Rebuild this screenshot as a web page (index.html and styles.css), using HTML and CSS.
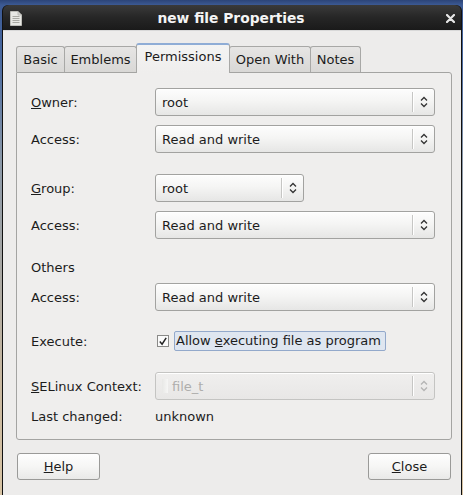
FILE: index.html
```html
<!DOCTYPE html>
<html>
<head>
<meta charset="utf-8">
<link rel="stylesheet" href="styles.css">
</head>
<body>
<div class="desktop">
  <div class="window">
    <div class="titlebar">
      <svg class="doc-icon" width="12" height="15" viewBox="0 0 12 15">
        <path d="M0.5 0.5 H8 L11.5 4 V14.5 H0.5 Z" fill="#e8e8e4" stroke="#bdbdb8"/>
        <path d="M8 0.5 V4 H11.5" fill="#cfcfca" stroke="#bdbdb8"/>
        <path d="M2.5 5.5 H9.5 M2.5 7.5 H9.5 M2.5 9.5 H9.5 M2.5 11.5 H9.5" stroke="#a8a8a2" stroke-width="1"/>
      </svg>
      <div class="title">new file Properties</div>
      <svg class="close-x" width="9" height="9" viewBox="0 0 9 9">
        <path d="M1 1 L8 8 M8 1 L1 8" stroke="#e6e6e6" stroke-width="2.2" stroke-linecap="round"/>
      </svg>
    </div>
    <div class="client">
      <div class="notebook">
        <div class="tabs">
          <div class="tab t-basic">Basic</div>
          <div class="tab t-emblems">Emblems</div>
          <div class="tab active t-perm">Permissions</div>
          <div class="tab t-open">Open With</div>
          <div class="tab t-notes">Notes</div>
        </div>
        <div class="panel">
          <div class="row r-owner">
            <div class="label"><u>O</u>wner:</div>
            <div class="combo wide"><span class="val">root</span><span class="sep"></span><span class="arrows"><svg width="8" height="12" viewBox="0 0 8 12"><path d="M1 4.5 L4 1.5 L7 4.5 M1 7.5 L4 10.5 L7 7.5" fill="none" stroke="#333" stroke-width="1.3"/></svg></span></div>
          </div>
          <div class="row r-gap9">
            <div class="label">Access:</div>
            <div class="combo wide"><span class="val">Read and write</span><span class="sep"></span><span class="arrows"><svg width="8" height="12" viewBox="0 0 8 12"><path d="M1 4.5 L4 1.5 L7 4.5 M1 7.5 L4 10.5 L7 7.5" fill="none" stroke="#333" stroke-width="1.3"/></svg></span></div>
          </div>
          <div class="row r-gap21">
            <div class="label"><u>G</u>roup:</div>
            <div class="combo narrow"><span class="val">root</span><span class="sep"></span><span class="arrows"><svg width="8" height="12" viewBox="0 0 8 12"><path d="M1 4.5 L4 1.5 L7 4.5 M1 7.5 L4 10.5 L7 7.5" fill="none" stroke="#333" stroke-width="1.3"/></svg></span></div>
          </div>
          <div class="row r-gap9">
            <div class="label">Access:</div>
            <div class="combo wide"><span class="val">Read and write</span><span class="sep"></span><span class="arrows"><svg width="8" height="12" viewBox="0 0 8 12"><path d="M1 4.5 L4 1.5 L7 4.5 M1 7.5 L4 10.5 L7 7.5" fill="none" stroke="#333" stroke-width="1.3"/></svg></span></div>
          </div>
          <div class="row r-others">
            <div class="label">Others</div>
          </div>
          <div class="row r-gap6">
            <div class="label">Access:</div>
            <div class="combo wide"><span class="val">Read and write</span><span class="sep"></span><span class="arrows"><svg width="8" height="12" viewBox="0 0 8 12"><path d="M1 4.5 L4 1.5 L7 4.5 M1 7.5 L4 10.5 L7 7.5" fill="none" stroke="#333" stroke-width="1.3"/></svg></span></div>
          </div>
          <div class="row r-exec">
            <div class="label">Execute:</div>
            <div class="check-wrap">
              <span class="checkbox"><svg width="11" height="11" viewBox="0 0 11 11"><path d="M2 5.5 L4.5 8.5 L9 1.5" fill="none" stroke="#222" stroke-width="1.6"/></svg></span>
              <span class="check-label">Allow <u>e</u>xecuting file as program</span>
            </div>
          </div>
          <div class="row r-gap21">
            <div class="label"><u>S</u>ELinux Context:</div>
            <div class="combo wide disabled"><span class="ghost"></span><span class="val">file_t</span><span class="sep"></span><span class="arrows"><svg width="8" height="12" viewBox="0 0 8 12"><path d="M1 4.5 L4 1.5 L7 4.5 M1 7.5 L4 10.5 L7 7.5" fill="none" stroke="#b4b4b4" stroke-width="1.3"/></svg></span></div>
          </div>
          <div class="row r-last">
            <div class="label">Last changed:</div>
            <div class="plain">unknown</div>
          </div>
        </div>
      </div>
      <div class="buttons">
        <div class="btn"><u>H</u>elp</div>
        <div class="btn"><u>C</u>lose</div>
      </div>
    </div>
  </div>
</div>
</body>
</html>
```

FILE: styles.css
```css
* { box-sizing: border-box; }
html, body {
  margin: 0;
  padding: 0;
}
body {
  width: 463px;
  height: 495px;
  overflow: hidden;
  font-family: "DejaVu Sans", sans-serif;
  font-size: 13px;
  color: #1c1c1c;
}
.desktop {
  width: 463px;
  height: 495px;
  background: linear-gradient(180deg, #2c4478 0px, #3c5a94 5px, #4a6aa0 60px, #8a98a8 160px, #c8b8a0 380px, #d8c4a4 495px);
  padding: 5px 1px 0 2px;
}
.window {
  height: 490px;
  background: #111;
  border-radius: 6px 6px 0 0;
  padding: 0 1px;
  display: flex;
  flex-direction: column;
}
.titlebar {
  height: 25px;
  flex: none;
  border-radius: 6px 6px 0 0;
  background: linear-gradient(180deg, #3a3a3a 0%, #262626 50%, #1a1a1a 100%);
  display: flex;
  align-items: center;
  position: relative;
  padding: 0 6px 0 7px;
}
.doc-icon { flex: none; margin-top: 1px; }
.title {
  flex: 1;
  text-align: center;
  color: #f4f4f4;
  font-weight: bold;
  font-size: 13.8px;
  margin-left: -6px;
  margin-top: 1px;
}
.close-x { flex: none; margin-top: 1px; }
.client {
  flex: 1;
  background: #edeceb;
  padding: 12px 9px 0 13px;
  border-top: 1px solid #d8d8d8;
}
.notebook { width: 436px; }
.tabs {
  display: flex;
  align-items: flex-end;
  height: 29px;
  position: relative;
  z-index: 1;
}
.tab {
  height: 26px;
  border: 1px solid #a8a8a6;
  border-bottom: none;
  border-radius: 3px 3px 0 0;
  background: linear-gradient(180deg, #e6e5e4, #d9d8d6);
  padding: 5px 0 0 0;
  text-align: center;
  margin-right: -1px;
  color: #1c1c1c;
  white-space: nowrap;
}
.t-basic { width: 49px; }
.t-emblems { width: 73px; }
.t-perm { width: 94px; }
.t-open { width: 82px; }
.t-notes { width: 51px; }
.tab.active {
  height: 30px;
  margin-bottom: -1px;
  background: linear-gradient(180deg, #f4f4f3, #efeeed);
  border-color: #a8a8a6;
  border-top: 2px solid #8fadd6;
  padding-top: 4px;
}
.panel {
  height: 368px;
  border: 1px solid #a4a4a2;
  border-radius: 0 3px 3px 3px;
  background: #efeeed;
  padding: 15px 16px 0 14px;
}
.row {
  display: flex;
  align-items: center;
  height: 28px;
}
.r-gap9 { margin-top: 9px; }
.r-gap21 { margin-top: 21px; }
.r-gap6 { margin-top: 6px; }
.r-others { margin-top: 18px; height: 20px; }
.r-exec { margin-top: 20px; height: 20px; }
.r-last { margin-top: 8px; height: 16px; }
.label {
  width: 124px;
  flex: none;
  white-space: nowrap;
}
.combo {
  height: 28px;
  border: 1px solid #a2a2a0;
  border-radius: 3px;
  background: linear-gradient(180deg, #fdfdfd 0%, #f5f5f4 45%, #e6e6e5 100%);
  display: flex;
  align-items: center;
  padding-left: 6px;
  box-shadow: inset 0 1px 0 #ffffff;
}
.combo.wide { width: 281px; }
.combo.narrow { width: 149px; }
.val { flex: 1; white-space: nowrap; }
.sep {
  width: 1px;
  height: 20px;
  background: #c6c6c4;
  box-shadow: 1px 0 0 #ffffff;
  flex: none;
}
.arrows {
  width: 21px;
  flex: none;
  display: flex;
  justify-content: center;
  align-items: center;
}
.arrows svg { display: block; }
.combo.disabled {
  background: linear-gradient(180deg, #f0efee, #e8e7e6);
  border-color: #c4c4c2;
  color: #aeaeac;
}
.ghost {
  width: 6px;
  height: 14px;
  background: linear-gradient(90deg, #e8e8e6, #f6f6f5);
  margin-right: 4px;
  flex: none;
}
.check-wrap {
  display: flex;
  align-items: center;
}
.checkbox {
  width: 12px;
  height: 12px;
  border: 1px solid #8a8a88;
  background: #fafafa;
  display: flex;
  align-items: center;
  justify-content: center;
  margin-left: 2px;
  margin-right: 5px;
}
.checkbox svg { display: block; }
.check-label {
  width: 212px;
  height: 20px;
  line-height: 18px;
  padding: 0 1px;
  border: 1px solid #93a9cb;
  border-radius: 2px;
  background: #dfe6f0;
  white-space: nowrap;
}
.buttons {
  display: flex;
  justify-content: space-between;
  padding: 13px 1px 0 1px;
}
.btn {
  width: 83px;
  height: 27px;
  border: 1px solid #9a9a98;
  border-radius: 3px;
  background: linear-gradient(180deg, #fefefe 0%, #f6f6f5 50%, #e9e9e8 100%);
  display: flex;
  align-items: center;
  justify-content: center;
}
```
